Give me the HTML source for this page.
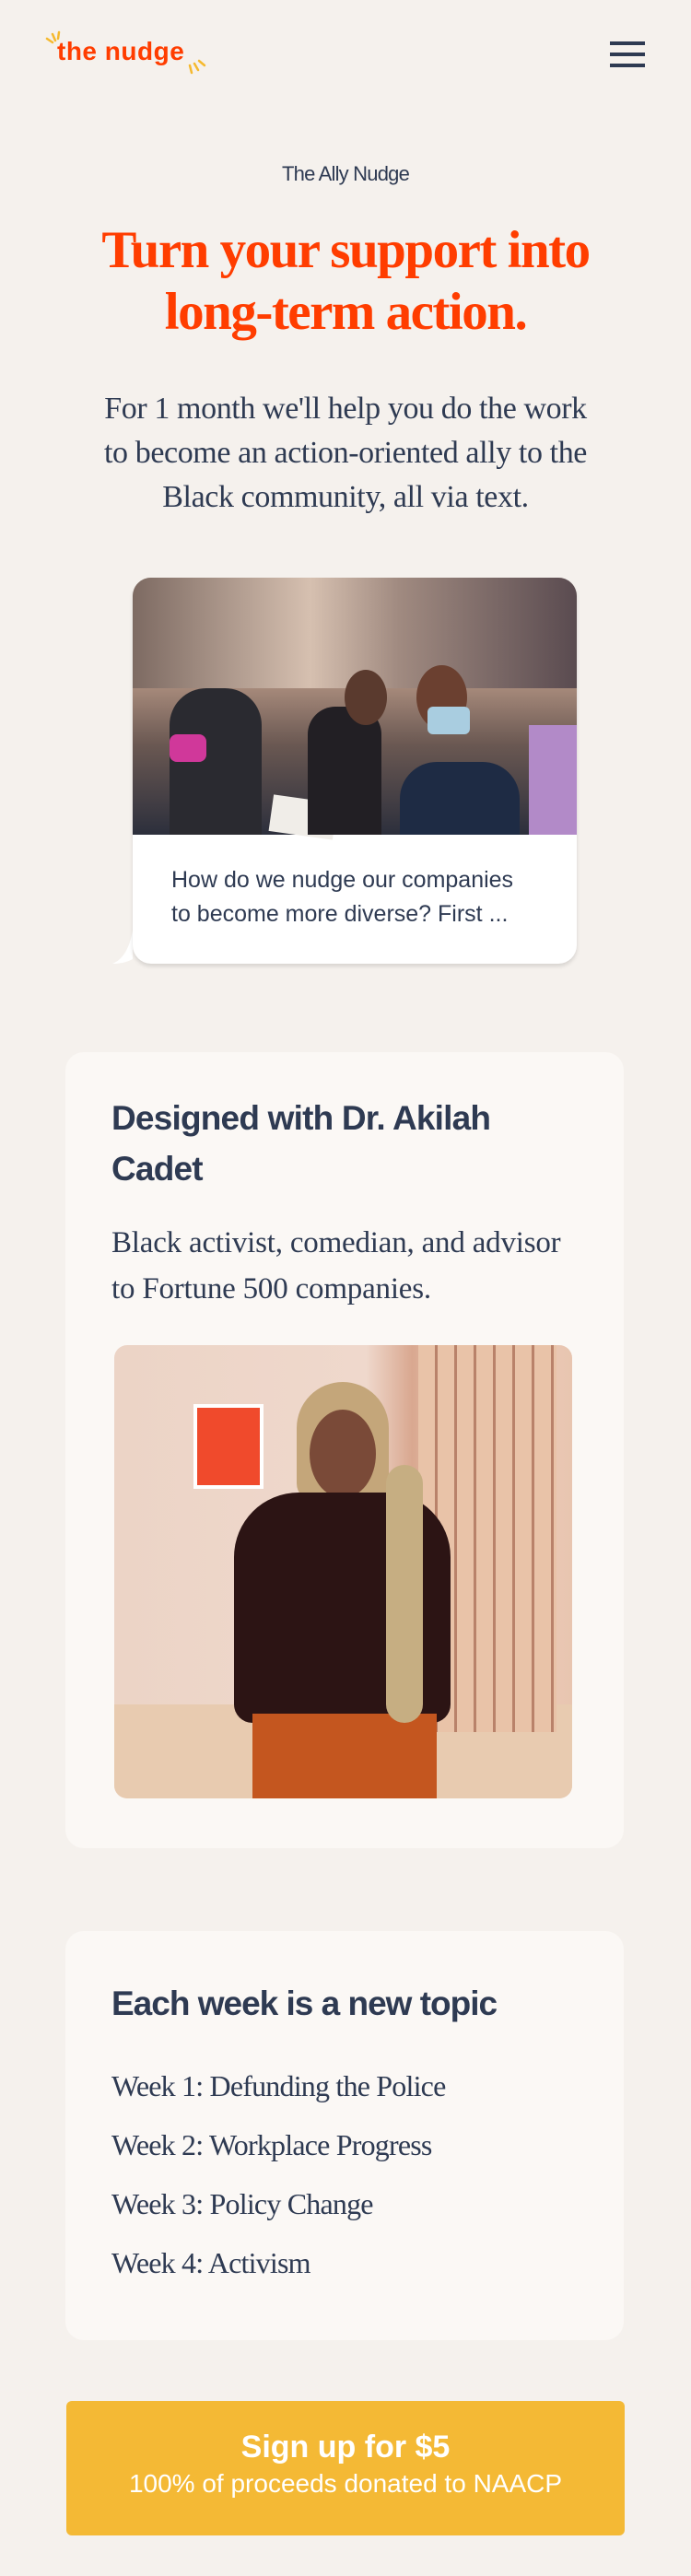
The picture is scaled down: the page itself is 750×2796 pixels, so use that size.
<!DOCTYPE html>
<html><head><meta charset="utf-8"><style>
*{margin:0;padding:0;box-sizing:border-box}
body{width:750px;height:2796px;background:#f5f1ed;position:relative;overflow:hidden;font-family:"Liberation Sans",sans-serif;color:#2e3a52}
.abs{position:absolute}
.logo{left:62px;top:40px;font-size:28px;font-weight:bold;color:#ff3d00;letter-spacing:0.5px}
.ham{left:662px;width:38px;height:4px;background:#2e3a52}
.c{left:0;width:750px;text-align:center}
.serif{font-family:"Liberation Serif",serif}
.card{background:#fbf8f5;border-radius:20px;left:71px;width:606px}
</style></head><body>
<svg class="abs" style="left:48px;top:33px" width="24" height="20"><g stroke="#f5b92e" stroke-width="2.5" stroke-linecap="round"><line x1="3" y1="9" x2="9" y2="13"/><line x1="9" y1="4" x2="12" y2="11"/><line x1="16" y1="2" x2="15" y2="9"/></g></svg>
<svg class="abs" style="left:202px;top:63px" width="24" height="22"><g stroke="#f5b92e" stroke-width="2.5" stroke-linecap="round"><line x1="4" y1="8" x2="6" y2="16"/><line x1="9" y1="6" x2="13" y2="13"/><line x1="14" y1="3" x2="20" y2="8"/></g></svg>
<div class="abs logo">the nudge</div>
<div class="abs ham" style="top:45px"></div>
<div class="abs ham" style="top:57px"></div>
<div class="abs ham" style="top:69px"></div>

<div class="abs c" style="top:176px;font-size:22px;letter-spacing:-0.8px">The Ally Nudge</div>
<div class="abs c serif" style="top:238px;font-size:57px;line-height:67px;color:#ff3d00;font-weight:bold;letter-spacing:-1.5px">Turn your support into<br>long-term action.</div>
<div class="abs c serif" style="top:420px;font-size:34px;line-height:48px;letter-spacing:-0.4px">For 1 month we'll help you do the work<br>to become an action-oriented ally to the<br>Black community, all via text.</div>

<svg class="abs" style="left:118px;top:1010px" width="40" height="40"><path d="M26 0 C22 22 14 32 4 36 C14 36 20 34 26 31 Z" fill="#fff"/></svg>
<div class="abs" style="left:144px;top:627px;width:482px;height:419px;background:#fff;border-radius:20px;overflow:hidden;box-shadow:0 3px 4px rgba(0,0,0,0.12)">
<div style="position:absolute;left:0;top:0;width:482px;height:279px;background:linear-gradient(180deg,#8d7c72 0%,#c9a692 30%,#6a5852 65%,#2c2f3c 100%)">
<div style="position:absolute;left:0;top:0;width:482px;height:120px;background:linear-gradient(90deg,#7d6a62,#d6c0b0 40%,#a08a80 60%,#5a4b50)"></div>
<div style="position:absolute;left:40px;top:120px;width:100px;height:159px;background:#2a2a30;border-radius:40px 40px 0 0"></div>
<div style="position:absolute;left:150px;top:240px;width:70px;height:40px;background:#f0ede8;transform:rotate(8deg)"></div>
<div style="position:absolute;left:190px;top:140px;width:80px;height:139px;background:#221f24;border-radius:30px 30px 0 0"></div>
<div style="position:absolute;left:290px;top:200px;width:130px;height:79px;background:#1e2b44;border-radius:40px 40px 0 0"></div>
<div style="position:absolute;left:308px;top:95px;width:55px;height:70px;background:#6b4030;border-radius:50%"></div>
<div style="position:absolute;left:320px;top:140px;width:46px;height:30px;background:#a9cde0;border-radius:6px"></div>
<div style="position:absolute;left:230px;top:100px;width:46px;height:60px;background:#5a3a2e;border-radius:50%"></div>
<div style="position:absolute;left:40px;top:170px;width:40px;height:30px;background:#d0389a;border-radius:8px"></div>
<div style="position:absolute;left:430px;top:160px;width:52px;height:119px;background:#b28ac8"></div>
</div>
<div style="position:absolute;left:42px;top:310px;font-size:25px;line-height:37px;color:#2e3a52">How do we nudge our companies<br>to become more diverse? First ...</div>
</div>

<div class="abs card" style="top:1142px;height:864px">
<div style="position:absolute;left:50px;top:44px;font-size:37px;line-height:55px;font-weight:bold;letter-spacing:-0.8px">Designed with Dr. Akilah<br>Cadet</div>
<div class="serif" style="position:absolute;left:50px;top:182px;font-size:33px;line-height:50px;letter-spacing:-0.2px">Black activist, comedian, and advisor<br>to Fortune 500 companies.</div>
<div style="position:absolute;left:53px;top:318px;width:497px;height:492px;border-radius:14px;overflow:hidden;background:linear-gradient(90deg,#ecd4c6 0%,#efd8cc 55%,#d9a890 65%,#f0d2c0 80%,#e8c5b0 100%)">
<div style="position:absolute;left:0;top:390px;width:497px;height:102px;background:#e8cbb0"></div>
<div style="position:absolute;left:86px;top:64px;width:76px;height:92px;background:#f04a2c;border:4px solid #fff"></div>
<div style="position:absolute;left:330px;top:0;width:150px;height:420px;background:repeating-linear-gradient(90deg,#e9c3a8 0 18px,#b9826a 18px 21px)"></div>
<div style="position:absolute;left:198px;top:40px;width:100px;height:130px;background:#c4a67a;border-radius:50px 50px 20px 20px"></div>
<div style="position:absolute;left:212px;top:70px;width:72px;height:96px;background:#7a4a38;border-radius:50%"></div>
<div style="position:absolute;left:130px;top:160px;width:235px;height:250px;background:#2c1414;border-radius:70px 70px 20px 20px"></div>
<div style="position:absolute;left:150px;top:400px;width:200px;height:92px;background:#c4561f"></div>
<div style="position:absolute;left:295px;top:130px;width:40px;height:280px;background:#c6ae82;border-radius:20px"></div>
</div>
</div>

<div class="abs card" style="top:2096px;height:444px">
<div style="position:absolute;left:50px;top:58px;font-size:37px;font-weight:bold;letter-spacing:-1px">Each week is a new topic</div>
<div class="serif" style="position:absolute;left:50px;top:136px;font-size:32px;line-height:64px;letter-spacing:-0.8px">Week 1: Defunding the Police<br>Week 2: Workplace Progress<br>Week 3: Policy Change<br>Week 4: Activism</div>
</div>

<div class="abs" style="left:72px;top:2606px;width:606px;height:146px;background:#f4b935;border-radius:6px;text-align:center;color:#fff">
<div style="margin-top:30px;font-size:34px;font-weight:bold;line-height:40px">Sign up for $5</div>
<div style="font-size:28px;line-height:40px;font-weight:300">100% of proceeds donated to NAACP</div>
</div>
</body></html>
